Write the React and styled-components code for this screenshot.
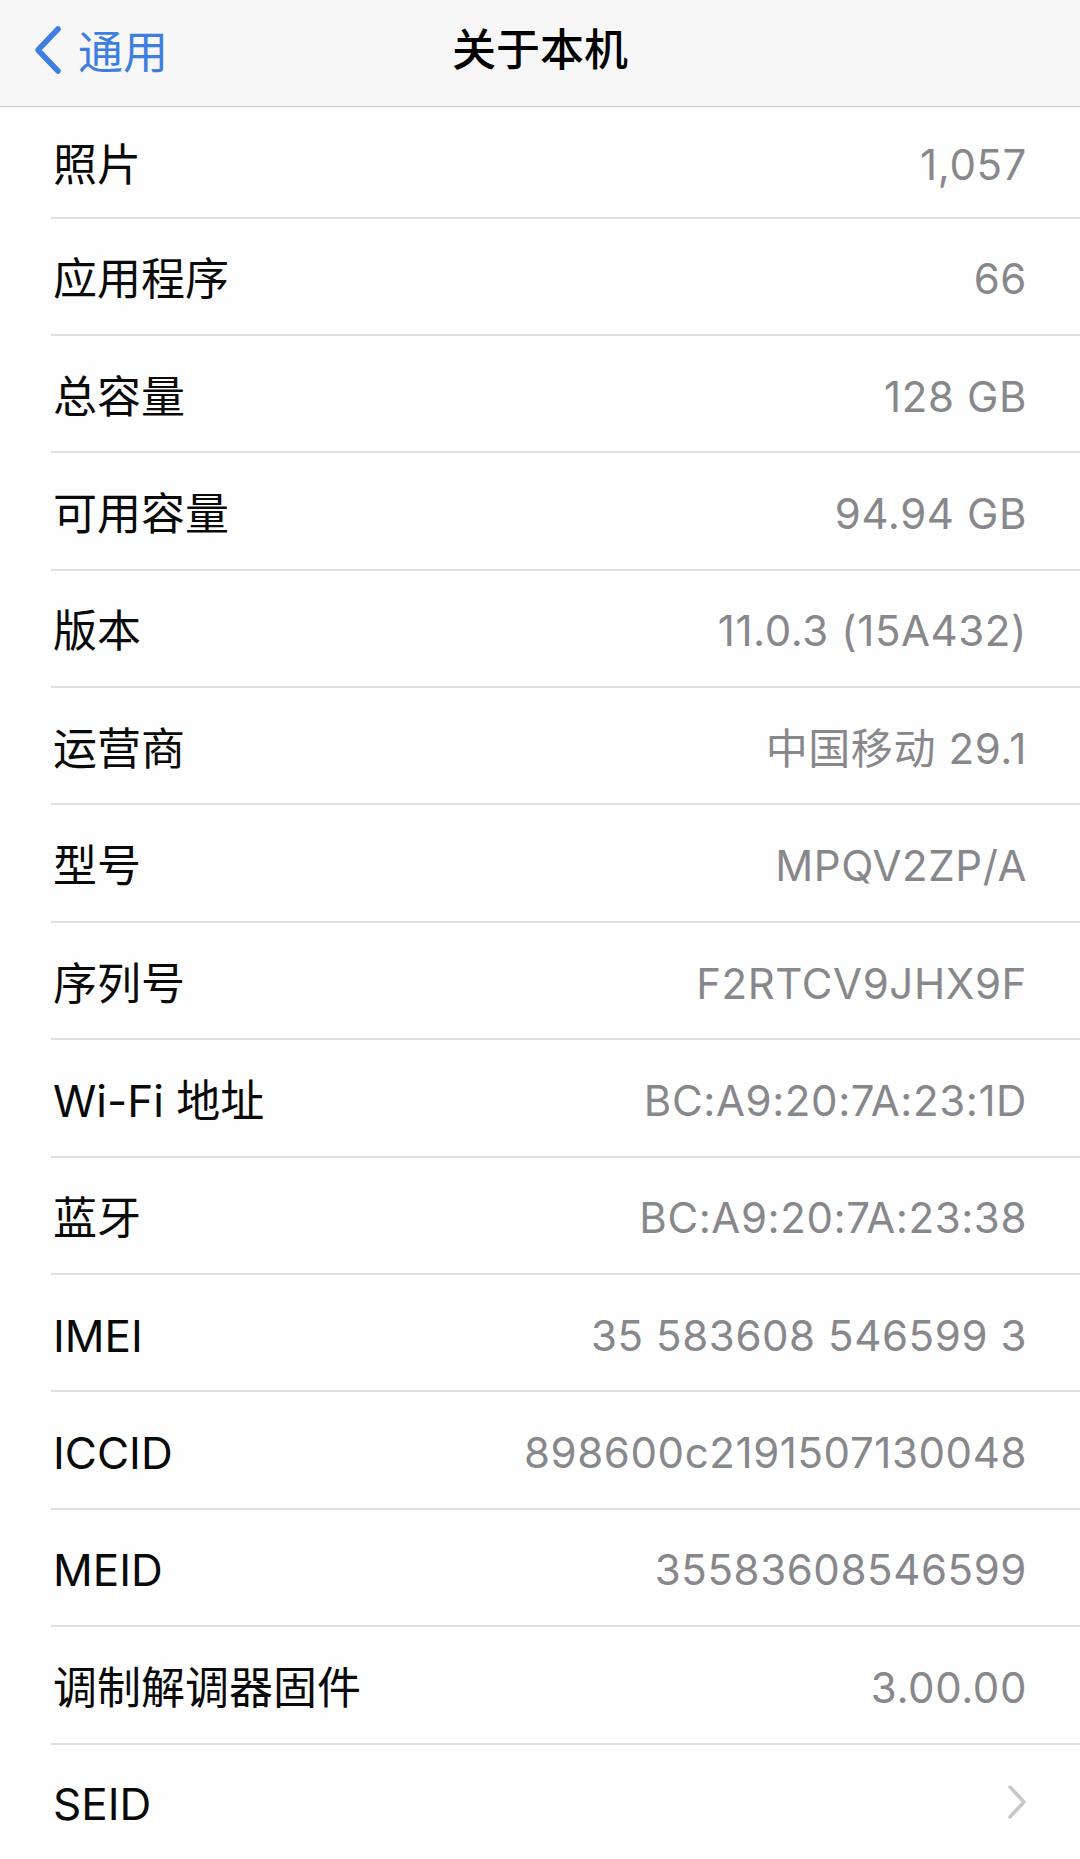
import React from "react";
import styled, { createGlobalStyle } from "styled-components";

const rows = [
  ["照片", "1,057"],
  ["应用程序", "66"],
  ["总容量", "128 GB"],
  ["可用容量", "94.94 GB"],
  ["版本", "11.0.3 (15A432)"],
  ["运营商", "中国移动 29.1"],
  ["型号", "MPQV2ZP/A"],
  ["序列号", "F2RTCV9JHX9F"],
  ["Wi-Fi 地址", "BC:A9:20:7A:23:1D"],
  ["蓝牙", "BC:A9:20:7A:23:38"],
  ["IMEI", "35 583608 546599 3"],
  ["ICCID", "898600c2191507130048"],
  ["MEID", "35583608546599"],
  ["调制解调器固件", "3.00.00"],
];

const App = () => {
  return (
    <>
      <GlobalStyle />
      <Screen>
        <NavBar>
          <BackButton>
            <svg width="34" height="50" viewBox="0 0 34 50">
              <path
                d="M28 4 L8 25 L28 46"
                fill="none"
                stroke="#3d7ee0"
                strokeWidth="5.5"
                strokeLinecap="round"
                strokeLinejoin="round"
              />
            </svg>
            <BackLabel>通用</BackLabel>
          </BackButton>
          <Title>关于本机</Title>
        </NavBar>
        <List>
          {rows.map(([label, value], i) => (
            <Row key={label} first={i === 0}>
              <Label>{label}</Label>
              <Value>{value}</Value>
            </Row>
          ))}
          <Row last>
            <Label>SEID</Label>
            <svg width="20" height="36" viewBox="0 0 20 36">
              <path
                d="M3 3 L17 18 L3 33"
                fill="none"
                stroke="#c7c7cc"
                strokeWidth="3.5"
                strokeLinecap="round"
                strokeLinejoin="round"
              />
            </svg>
          </Row>
        </List>
      </Screen>
    </>
  );
};

export default App;

const GlobalStyle = createGlobalStyle`
  html, body {
    margin: 0;
    padding: 0;
    background: #fefefe;
  }
  body {
    font-family: Inter, "Noto Sans CJK SC", sans-serif;
    -webkit-font-smoothing: antialiased;
  }
`;

const Screen = styled.div`
  width: 1080px;
  height: 1859px;
  overflow: hidden;
  background: #fefefe;
`;

const NavBar = styled.header`
  position: relative;
  height: 106px;
  background: #f7f7f7;
  border-bottom: 1px solid #c9c9c9;
  display: flex;
  align-items: center;
  justify-content: center;
`;

const BackButton = styled.div`
  position: absolute;
  left: 30px;
  top: 25px;
  display: flex;
  align-items: center;
  gap: 14px;
`;

const BackLabel = styled.span`
  font-family: "Noto Sans CJK SC", sans-serif;
  font-size: 45px;
  color: #3d7ee0;
  line-height: 1;
  margin-top: -2px;
`;

const Title = styled.h1`
  margin: -12px 0 0;
  font-family: "Noto Sans CJK SC", sans-serif;
  font-size: 44px;
  font-weight: 500;
  color: #000;
`;

const List = styled.main`
  display: flex;
  flex-direction: column;
`;

const Row = styled.div`
  position: relative;
  box-sizing: border-box;
  height: ${(p) => (p.first ? "111.5px" : p.last ? "115px" : "117.4px")};
  padding: 0 53px 0 53px;
  display: flex;
  align-items: center;
  justify-content: space-between;

  &::after {
    content: "";
    display: ${(p) => (p.last ? "none" : "block")};
    position: absolute;
    left: 51px;
    right: 0;
    bottom: 0;
    height: 2px;
    background: #e0e0e2;
  }
`;

const Label = styled.span`
  font-size: 44px;
  color: #0a0a0a;
  line-height: 1;
  margin-top: 4px;
`;

const Value = styled.span`
  font-size: 42px;
  color: #88888c;
  line-height: 1;
  margin-top: 4px;
  letter-spacing: 0.6px;
`;
